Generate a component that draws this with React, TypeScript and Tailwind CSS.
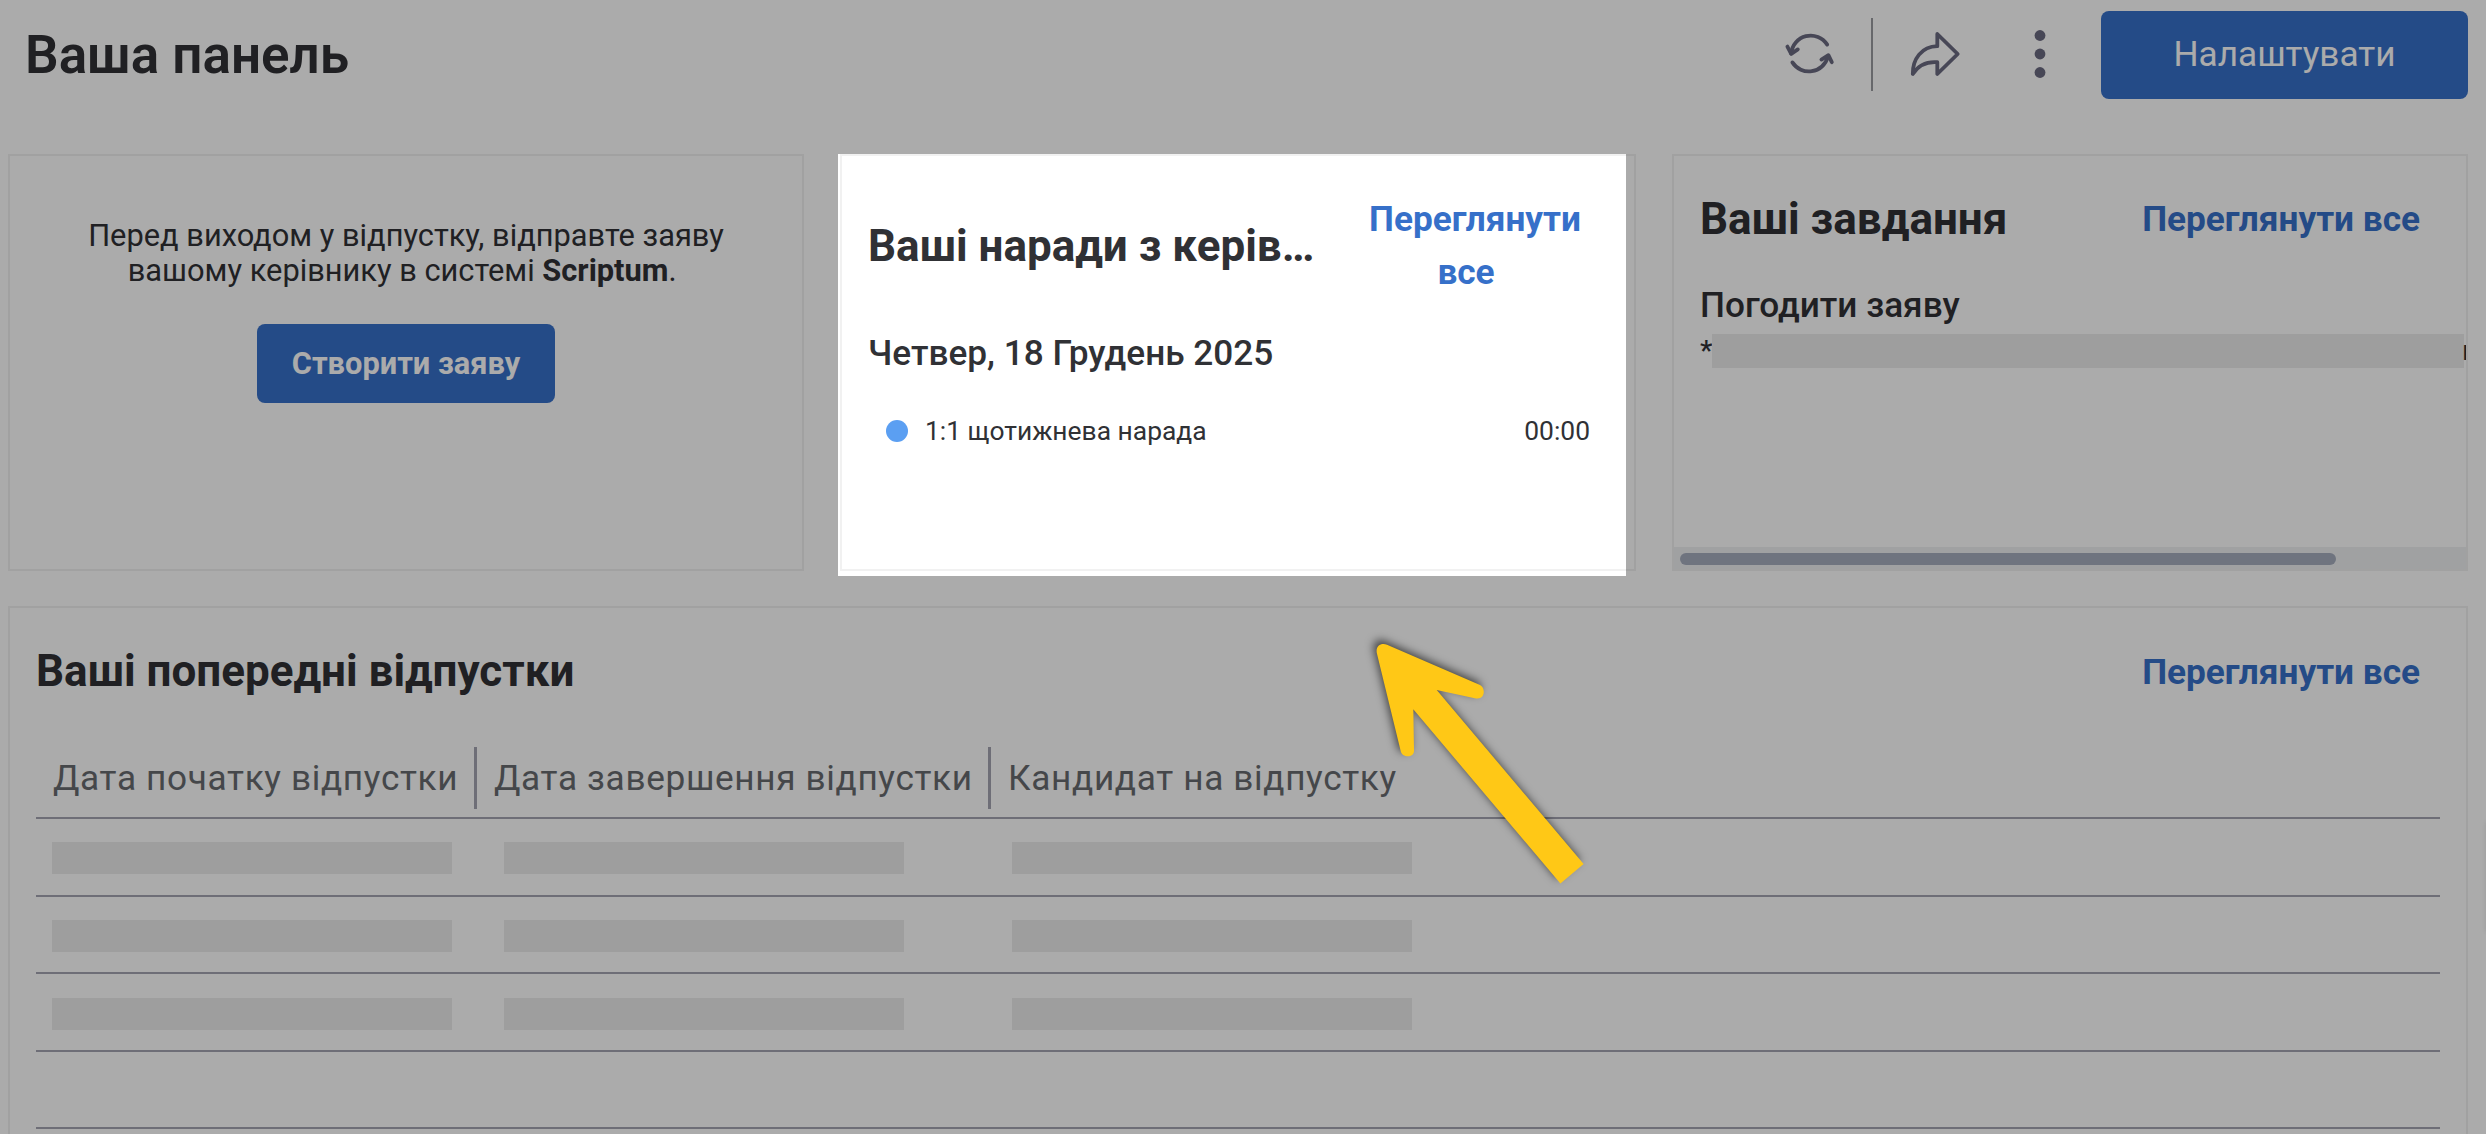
import type { ReactNode } from 'react';

/* ─── Static data ─────────────────────────────────────────────── */

const COLUMNS: { label: string; cell: string }[] = [
  { label: 'Дата початку відпустки',    cell: 'w-[441px] pl-[17px] border-r-3 border-[#a4a5b2]' },
  { label: 'Дата завершення відпустки', cell: 'w-[514px] pl-[17px] border-r-3 border-[#a4a5b2]' },
  { label: 'Кандидат на відпустку',     cell: 'flex-1 pl-[17px]'                                },
];

const ROWS = [1, 2, 3];

/* ─── Icons ───────────────────────────────────────────────────── */

function RefreshIcon() {
  return (
    <svg width="52" height="48" viewBox="0 0 52 48" fill="none" stroke="#6b6a80" strokeWidth="3.8" strokeLinecap="round" strokeLinejoin="round">
      <path d="M44.2 14.6A19.6 19.6 0 0 0 8.2 23.6" />
      <path d="M4.400 16.600l3.800 7.200 6.600-4.400" />
      <path d="M9.400 32.400A19.600 19.600 0 0 0 44.800 27" />
      <path d="M38.400 29.600l7-4.400 3.400 7" />
    </svg>
  );
}

function ShareIcon() {
  return (
    <svg width="52" height="48" viewBox="0 0 52 48" fill="none" stroke="#6b6a80" strokeWidth="3.8" strokeLinejoin="round">
      <path d="M28.3 4L48.7 24 28.3 44V32.2C18 31.4 9.5 35 3.8 44 3.6 29 12.5 16.6 28.3 16.2Z" />
    </svg>
  );
}

function KebabIcon() {
  return (
    <svg width="12" height="48" viewBox="0 0 12 48" fill="#6b6a80">
      <circle cx="6" cy="5.5" r="5.4" />
      <circle cx="6" cy="24" r="5.4" />
      <circle cx="6" cy="42.5" r="5.4" />
    </svg>
  );
}

/* ─── Building blocks ─────────────────────────────────────────── */

function Card({ className = '', children }: { className?: string; children: ReactNode }) {
  return (
    <section className={`border-2 border-[#f1f1f1] bg-white overflow-hidden flex flex-col ${className}`}>
      {children}
    </section>
  );
}

function CardTitle({ children }: { children: ReactNode }) {
  return <h2 className="whitespace-nowrap text-[44px] leading-[53px] font-bold">{children}</h2>;
}

function ViewAll() {
  return (
    <a href="#" className="shrink-0 text-[35.2px] leading-[53px] font-bold text-[#3670c9]">
      Переглянути все
    </a>
  );
}

/* ─── Page ────────────────────────────────────────────────────── */

export default function App() {
  return (
    <div className="relative h-[1134px] w-[2486px] overflow-hidden bg-white pl-2 pr-[18px] font-['Roboto',sans-serif] text-[#303135]">
      {/* Header */}
      <header className="flex h-[110px] items-center pl-[17px]">
        <h1 className="flex-1 text-[53px] leading-[60px] font-semibold">Ваша панель</h1>
        <div className="flex items-center pb-[2px]">
          <RefreshIcon />
          <span className="ml-[36px] h-[73px] w-[2px] bg-[#9a9ca0]" />
          <span className="ml-[36px]"><ShareIcon /></span>
          <span className="ml-[73px]"><KebabIcon /></span>
          <button type="button" className="ml-[55px] mt-[2px] h-[88px] w-[367px] rounded-lg bg-[#3670c9] pb-[2px] text-[35.2px] text-white">
            Налаштувати
          </button>
        </div>
      </header>

      {/* Widgets */}
      <main className="mt-[44px] flex flex-col gap-[35px]">
        <div className="grid h-[417px] grid-cols-3 gap-9">
          <Card className="items-center pt-[62px]">
            <p className="text-center text-[30.8px] leading-[35px]">
              Перед виходом у відпустку, відправте заяву
              <br />
              вашому керівнику в системі <b>Scriptum</b>.&nbsp;
            </p>
            <button type="button" className="mt-[36px] h-[79px] w-[298px] rounded-lg bg-[#3670c9] pt-[2px] text-[30.8px] font-bold text-white">
              Створити заяву
            </button>
          </Card>

          <Card className="pt-[37px] pl-[26px] pr-[46px]">
            <div className="flex items-center justify-between">
              <CardTitle>Ваші наради з керів…</CardTitle>
              <a href="#" className="w-[226px] text-center text-[35.2px] leading-[53px] font-bold text-[#3670c9]">
                Переглянути <span className="mr-[18px]">все</span>
              </a>
            </div>
            <h3 className="mt-[28px] text-[35.2px] leading-[53px] font-medium">Четвер, 18 Грудень 2025</h3>
            <div className="mt-[31px] -mr-[2px] flex items-center pl-[18px] text-[26.4px] leading-[40px]">
              <span className="mr-[17px] size-[22px] rounded-full bg-[#5b9ff2]" />
              <span className="flex-1">1:1 щотижнева нарада</span>
              <span>00:00</span>
            </div>
          </Card>

          <Card className="pt-[37px]">
            <div className="flex items-center justify-between pl-[26px] pr-[46px]">
              <CardTitle>Ваші завдання</CardTitle>
              <ViewAll />
            </div>
            <h3 className="mt-[33px] pl-[26px] text-[35.2px] leading-[53px] font-medium">Погодити заяву</h3>
            <div className="mt-[2px] flex w-[792px] items-center overflow-hidden pl-[26px] text-[28px] leading-[34px]">
              <span className="w-[12px] shrink-0 font-medium">*</span>
              <span className="h-[34px] w-[752px] shrink-0 bg-[#ececec]" />
              <span className="-ml-[2px] shrink-0">и</span>
            </div>
            <div className="-mx-[2px] -mb-[2px] mt-auto flex h-[24px] shrink-0 items-center bg-[#eff0f2] pl-[8px]">
              <span className="h-[12px] w-[656px] rounded-full bg-[#a6adbe]" />
            </div>
          </Card>
        </div>

        <Card className="h-[560px] pt-[37px] pl-[26px] pr-[26px]">
          <div className="flex h-[53px] items-center justify-between pr-[20px]">
            <CardTitle>Ваші попередні відпустки</CardTitle>
            <span className="pt-[2px]"><ViewAll /></span>
          </div>

          {/* Table */}
          <div className="mt-[41px] flex h-[80px] shrink-0 items-center border-b-2 border-[#a4a5b2] text-[35.2px] text-[#686b6f]">
            {COLUMNS.map((c) => (
              <div key={c.label} className={`flex h-[62px] items-center whitespace-nowrap tracking-[0.65px] ${c.cell}`}>
                {c.label}
              </div>
            ))}
          </div>
          {ROWS.map((r) => (
            <div key={r} className="flex h-[77.6px] shrink-0 border-b-2 border-[#a4a5b2] pt-[23.4px] pl-[16px]">
              <span className="h-[32px] w-[400px] bg-[#ececec]" />
              <span className="ml-[52px] h-[32px] w-[400px] bg-[#ececec]" />
              <span className="ml-[108px] h-[32px] w-[400px] bg-[#ececec]" />
            </div>
          ))}
          <div className="h-[77.6px] shrink-0 border-b-2 border-[#a4a5b2]" />
        </Card>
      </main>

      {/* Shadow of the collapsed side tab */}
      <div className="absolute -right-[2px] top-[822px] h-[110px] w-[2px] shadow-[0_0_4px_rgba(0,0,0,0.15)]" />

      {/* Spotlight over the meetings widget, dims everything else */}
      <div className="pointer-events-none absolute left-[838px] top-[154px] h-[422px] w-[788px] shadow-[0_0_0_2500px_rgba(0,0,0,0.33)]" />

      {/* Pointer arrow */}
      <svg className="pointer-events-none absolute left-[1350px] top-[620px] drop-shadow-[-3px_-4px_4px_rgba(0,0,0,0.6)]" width="250" height="280" viewBox="1350 620 250 280" fill="#ffc816">
        <path d="M1376.8 653C1375.5 646 1381 642.5 1387 644.8L1480 685C1486 688 1485 700 1476 698.4L1436.7 690 1583.6 864 1560.4 883.6 1413.3 709.3 1414 751C1414 758 1402 758 1400.7 751Z" />
      </svg>
    </div>
  );
}
